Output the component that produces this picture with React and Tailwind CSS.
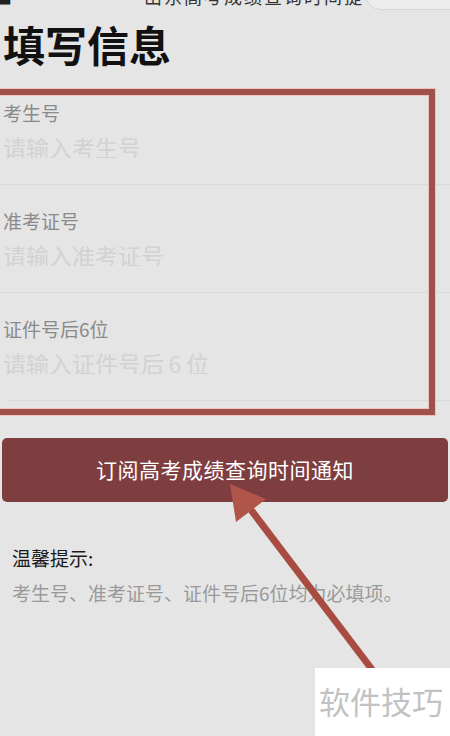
import React from 'react';

const fields = [
  { label: '考生号', placeholder: '请输入考生号' },
  { label: '准考证号', placeholder: '请输入准考证号' },
  { label: '证件号后6位', placeholder: '请输入证件号后\u20096\u2009位' },
];

const font = { fontFamily: '"Noto Sans CJK SC", "Noto Sans", sans-serif' };

export default function App() {
  return (
    <div className="relative w-[450px] h-[736px] overflow-hidden bg-[#e5e5e5]" style={font}>
      {/* cut-off top bar */}
      <div className="h-[10px] overflow-hidden flex items-start">
        <div className="-mt-[13px] ml-[-6px] text-[18px] leading-none text-[#222] w-[150px]">■</div>
        <div className="-mt-[13px] text-[18px] leading-none text-[#333] tracking-[2px]">山东高考成绩查询时间提</div>
        <div className="ml-auto -mt-[22px] mr-[-20px] w-[105px] h-[32px] rounded-full border border-[#d6d6d6] bg-[#ececec]" />
      </div>

      <h1 className="mt-[13px] ml-[3px] text-[42px] leading-none font-bold text-[#111]">填写信息</h1>

      <div className="mt-[12px] flex flex-col">
        {fields.map((f, i) => (
          <div key={f.label} className={`pt-[26px] pb-[26px] border-b border-[#d9d9d9] ${i === 2 ? 'ml-[8px]' : 'pl-[3px]'}`}>
            <div className={`text-[19px] leading-none text-[#8a8a8a] ${i === 2 ? '-ml-[5px]' : ''}`}>{f.label}</div>
            <input
              readOnly
              placeholder={f.placeholder}
              className={`mt-[13px] block w-full bg-transparent outline-none text-[23px] leading-none h-[23px] placeholder:text-[#d2d2d2] ${i === 2 ? '-ml-[5px]' : ''}`}
              style={font}
            />
          </div>
        ))}
      </div>

      <button
        className="mt-[37px] mx-[2px] w-[446px] h-[64px] rounded-[5px] bg-[#7e3d3f] text-white text-[21px] tracking-[0.5px]"
        style={font}
      >
        订阅高考成绩查询时间通知
      </button>

      <div className="mt-[46px] ml-[12px] text-[19px] leading-none text-[#1a1a1a]">温馨提示:</div>
      <div className="mt-[16px] ml-[12px] text-[19px] leading-none text-[#9a9a9a]">考生号、准考证号、证件号后6位均为必填项。</div>

      {/* annotation box */}
      <div className="absolute left-[-10px] top-[89px] w-[445px] h-[326px] border-[6px] border-[#a0514b] shadow-[0_0_0_1px_#eec5bd,inset_0_0_0_1px_#eec5bd] pointer-events-none" />

      {/* annotation arrow */}
      <svg className="absolute inset-0 pointer-events-none" width="450" height="736" viewBox="0 0 450 736">
        <line x1="248" y1="506" x2="380" y2="680" stroke="#a84c42" strokeWidth="7" />
        <polygon points="230,484 236,522 266,499" fill="#b0554a" />
      </svg>

      {/* watermark */}
      <div className="absolute left-[315px] top-[668px] w-[135px] h-[68px] bg-white flex items-start">
        <span className="mt-[17px] ml-[4px] text-[31px] leading-none text-[#c2c2c2]">软件技巧</span>
      </div>
    </div>
  );
}
